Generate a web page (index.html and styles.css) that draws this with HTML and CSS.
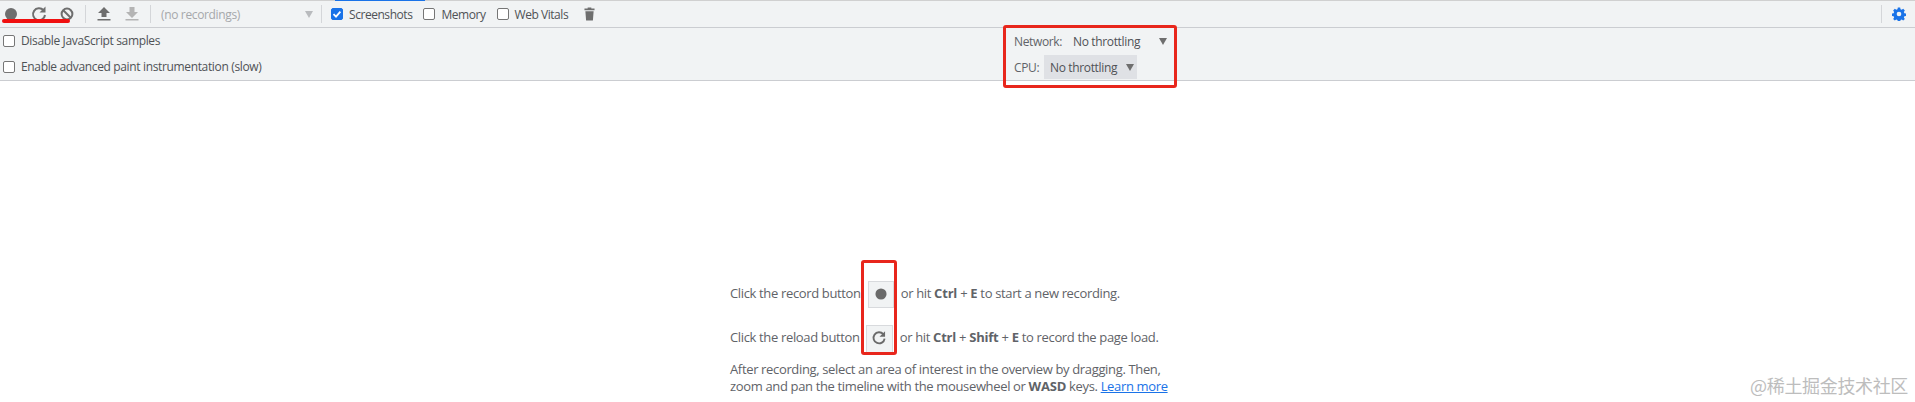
FILE: index.html
```html
<!DOCTYPE html>
<html lang="zh-CN">
<head>
    <meta charset="UTF-8">
    <title>Performance</title>
    <link rel="stylesheet" href="styles.css">
</head>
<body>
    <div class="tab-line"><div class="tab-active"></div></div>
    <div class="toolbar">
        <div class="tool-group">
            <svg class="tool" viewBox="0 0 28 26"><circle cx="11" cy="13" r="6" fill="#6e6e6e"/></svg>
            <svg class="tool" viewBox="0 0 28 26"><path d="M15.500 9.200A6 6 0 1 0 17 14" fill="none" stroke="#6e6e6e" stroke-width="2"/><path d="M17.500 5.500v6h-6z" fill="#6e6e6e"/></svg>
            <svg class="tool" viewBox="0 0 28 26"><circle cx="11" cy="13" r="5.400" fill="none" stroke="#6e6e6e" stroke-width="2"/><path d="M7 9l8 8" stroke="#6e6e6e" stroke-width="2"/></svg>
        </div>
        <div class="sep sep-a"></div>
        <svg class="tool" viewBox="0 0 28 26"><path d="M10 6l-6 6h3.500v4h5v-4H16zM3.500 18h13v1.600h-13z" fill="#6e6e6e"/></svg>
        <svg class="tool" viewBox="0 0 28 26"><path d="M7.500 6h5v5H16l-6 6-6-6h3.500zM3.500 18h13v1.600h-13z" fill="#b4b4b4"/></svg>
        <div class="sep sep-b"></div>
        <div class="rec-select"><span>(no recordings)</span><i class="arrow arrow-light"></i></div>
        <div class="sep sep-c"></div>
        <label class="check"><span class="box box-on"><svg viewBox="0 0 10 10"><path d="M1.500 5.200l2.500 2.400 4.400-5" fill="none" stroke="#fff" stroke-width="1.800"/></svg></span>Screenshots</label>
        <label class="check"><span class="box"></span>Memory</label>
        <label class="check"><span class="box"></span>Web Vitals</label>
        <svg class="trash" viewBox="0 0 12 14"><path d="M4 0h4v1h3.500v2H.5V1H4zM1.500 4h9l-.8 10H2.300z" fill="#6e6e6e"/></svg>
        <div class="toolbar-right">
            <div class="sep"></div>
            <svg class="gear" viewBox="0 0 24 24"><path fill-rule="evenodd" d="M10 1h4l.6 3 2 .9 2.600-1.700 2.800 2.800-1.700 2.600.9 2 3 .6v4l-3 .6-.9 2 1.700 2.600-2.800 2.800-2.600-1.700-2 .9-.6 3h-4l-.6-3-2-.9-2.600 1.700-2.800-2.800 1.700-2.600-.9-2-3-.6v-4l3-.6.9-2-1.700-2.600 2.800-2.800 2.600 1.700 2-.9zM12 8a4 4 0 1 0 0 8 4 4 0 0 0 0-8z" fill="#1a73e8"/></svg>
        </div>
    </div>
    <div class="settings">
        <div class="settings-left">
            <label class="check"><span class="box"></span>Disable JavaScript samples</label>
            <label class="check"><span class="box"></span>Enable advanced paint instrumentation (slow)</label>
        </div>
        <div class="settings-right">
            <div class="throttle">
                <span class="net-label">Network:</span>
                <span class="net-value">No throttling</span><i class="arrow"></i>
            </div>
            <div class="throttle">
                <span class="cpu-label">CPU:</span>
                <span class="cpu-value">No throttling<i class="arrow"></i></span>
            </div>
        </div>
    </div>
    <div class="landing">
        <div class="hint">
            <div class="hint-row hint-record">Click the record button <span class="key-btn"><svg viewBox="0 0 26 27"><circle cx="13" cy="13" r="6" fill="#6a6a6a"/></svg></span> or hit <b>Ctrl</b> + <b>E</b> to start a new recording.</div>
            <div class="hint-row hint-reload">Click the reload button <span class="key-btn"><svg viewBox="0 0 27 28"><path d="M17.600 8.800A6 6 0 1 0 19 13.500" fill="none" stroke="#6a6a6a" stroke-width="2"/><path d="M19.500 5.500v6h-6z" fill="#6a6a6a"/></svg></span> or hit <b>Ctrl</b> + <b>Shift</b> + <b>E</b> to record the page load.</div>
            <div class="hint-note">
                <div>After recording, select an area of interest in the overview by dragging. Then,</div>
                <div>zoom and pan the timeline with the mousewheel or <b>WASD</b> keys. <a href="#">Learn more</a></div>
            </div>
        </div>
    </div>

    <!-- annotations drawn over the screenshot -->
    <div class="mark mark-line"></div>
    <div class="mark mark-throttle"></div>
    <div class="mark mark-buttons"></div>
    <div class="watermark">@稀土掘金技术社区</div>
</body>
</html>
```

FILE: styles.css
```css
html, body {
    margin: 0;
    padding: 0;
    height: 402px;
    overflow: hidden;
    background: #fff;
    color: #5f6368;
    font-family: "Open Sans", "Noto Sans", sans-serif;
    font-size: 12px;
    letter-spacing: -0.35px;
}
svg {
    display: block;
}
.tab-line {
    height: 1px;
    background: #d0d0d0;
    position: relative;
}
.tab-active {
    position: absolute;
    left: 335px;
    top: 0;
    width: 90px;
    height: 1px;
    background: #1a73e8;
}
.toolbar {
    display: flex;
    align-items: center;
    height: 26px;
    background: #f1f3f4;
    border-bottom: 1px solid #cbcdd1;
}
.tool-group {
    display: flex;
}
.tool {
    width: 28px;
    height: 26px;
    flex: none;
}
.sep {
    width: 1px;
    height: 18px;
    background: #d4d6d9;
    flex: none;
}
.sep-a {
    margin: 0 8px 0 1px;
}
.sep-b {
    margin: 0 10px 0 0;
}
.sep-c {
    margin: 0 9px 0 0;
}
.rec-select {
    display: flex;
    align-items: center;
    justify-content: space-between;
    width: 152px;
    padding-right: 8px;
    color: #a6a8ab;
}
.arrow {
    display: inline-block;
    width: 0;
    height: 0;
    border-left: 4px solid transparent;
    border-right: 4px solid transparent;
    border-top: 7px solid #6e6e6e;
}
.arrow-light {
    border-top-color: #b9bbbe;
}
.check {
    display: flex;
    align-items: center;
    gap: 6px;
    white-space: nowrap;
    color: #4f5256;
}
.toolbar .check {
    margin-right: 11px;
    letter-spacing: -0.45px;
}
.box {
    display: block;
    width: 10px;
    height: 10px;
    border: 1px solid #767676;
    border-radius: 2px;
    background: #fff;
    flex: none;
}
.box-on {
    background: #1a73e8;
    border-color: #1a73e8;
}
.trash {
    width: 11px;
    height: 14px;
    margin-left: 5px;
}
.toolbar-right {
    margin-left: auto;
    display: flex;
    align-items: center;
    gap: 10px;
    padding-right: 9px;
}
.gear {
    width: 14px;
    height: 14px;
}
.settings {
    display: flex;
    height: 52px;
    background: #f1f3f4;
    border-bottom: 1px solid #cbcdd1;
}
.settings-left {
    display: flex;
    flex-direction: column;
    gap: 12px;
    padding: 6px 0 0 3px;
    width: 1014px;
    box-sizing: border-box;
}
.settings-left .check {
    height: 14px;
    line-height: 14px;
}
.settings-right {
    display: flex;
    flex-direction: column;
}
.throttle {
    display: flex;
    align-items: center;
    height: 26px;
}
.net-label {
    width: 59px;
}
.net-value {
    width: 86px;
    color: #4f5256;
}
.cpu-label {
    width: 30px;
}
.cpu-value {
    display: flex;
    align-items: center;
    justify-content: space-between;
    width: 93px;
    height: 24px;
    padding: 0 3px 0 6px;
    box-sizing: border-box;
    background: #dfe1e5;
    color: #4f5256;
}
.landing {
    display: flex;
    padding-left: 730px;
}
.hint {
    width: 440px;
    padding-top: 198px;
    font-size: 13px;
}
.hint b {
    letter-spacing: -0.2px;
}
.hint-row {
    height: 28px;
    line-height: 28px;
    white-space: nowrap;
}
.hint-record {
    margin-bottom: 16px;
}
.key-btn {
    display: inline-block;
    vertical-align: middle;
    width: 26px;
    height: 27px;
    margin: 0 4px 0 4px;
    box-sizing: border-box;
    background: #f1f3f4;
    border: 1px solid #d8dadd;
}
.hint-reload .key-btn {
    width: 27px;
    height: 28px;
    margin-left: 3px;
}
.key-btn svg {
    width: 100%;
    height: 100%;
}
.hint-note {
    margin: 10px 0 0;
    line-height: 17px;
    white-space: nowrap;
}
.hint a {
    color: #1a73e8;
    text-decoration: underline;
}
.mark {
    position: absolute;
    box-sizing: border-box;
    border-radius: 3px;
}
.mark-line {
    left: 2px;
    top: 19px;
    width: 68px;
    height: 4px;
    background: #f01010;
}
.mark-throttle {
    left: 1003px;
    top: 25px;
    width: 174px;
    height: 63px;
    border: 3px solid #e8261c;
}
.mark-buttons {
    left: 861px;
    top: 260px;
    width: 36px;
    height: 95px;
    border: 3px solid #e8261c;
}
.watermark {
    position: absolute;
    right: 7px;
    top: 372px;
    font-family: "Noto Sans CJK SC", sans-serif;
    font-size: 18px;
    color: #bdbdbd;
}
```
